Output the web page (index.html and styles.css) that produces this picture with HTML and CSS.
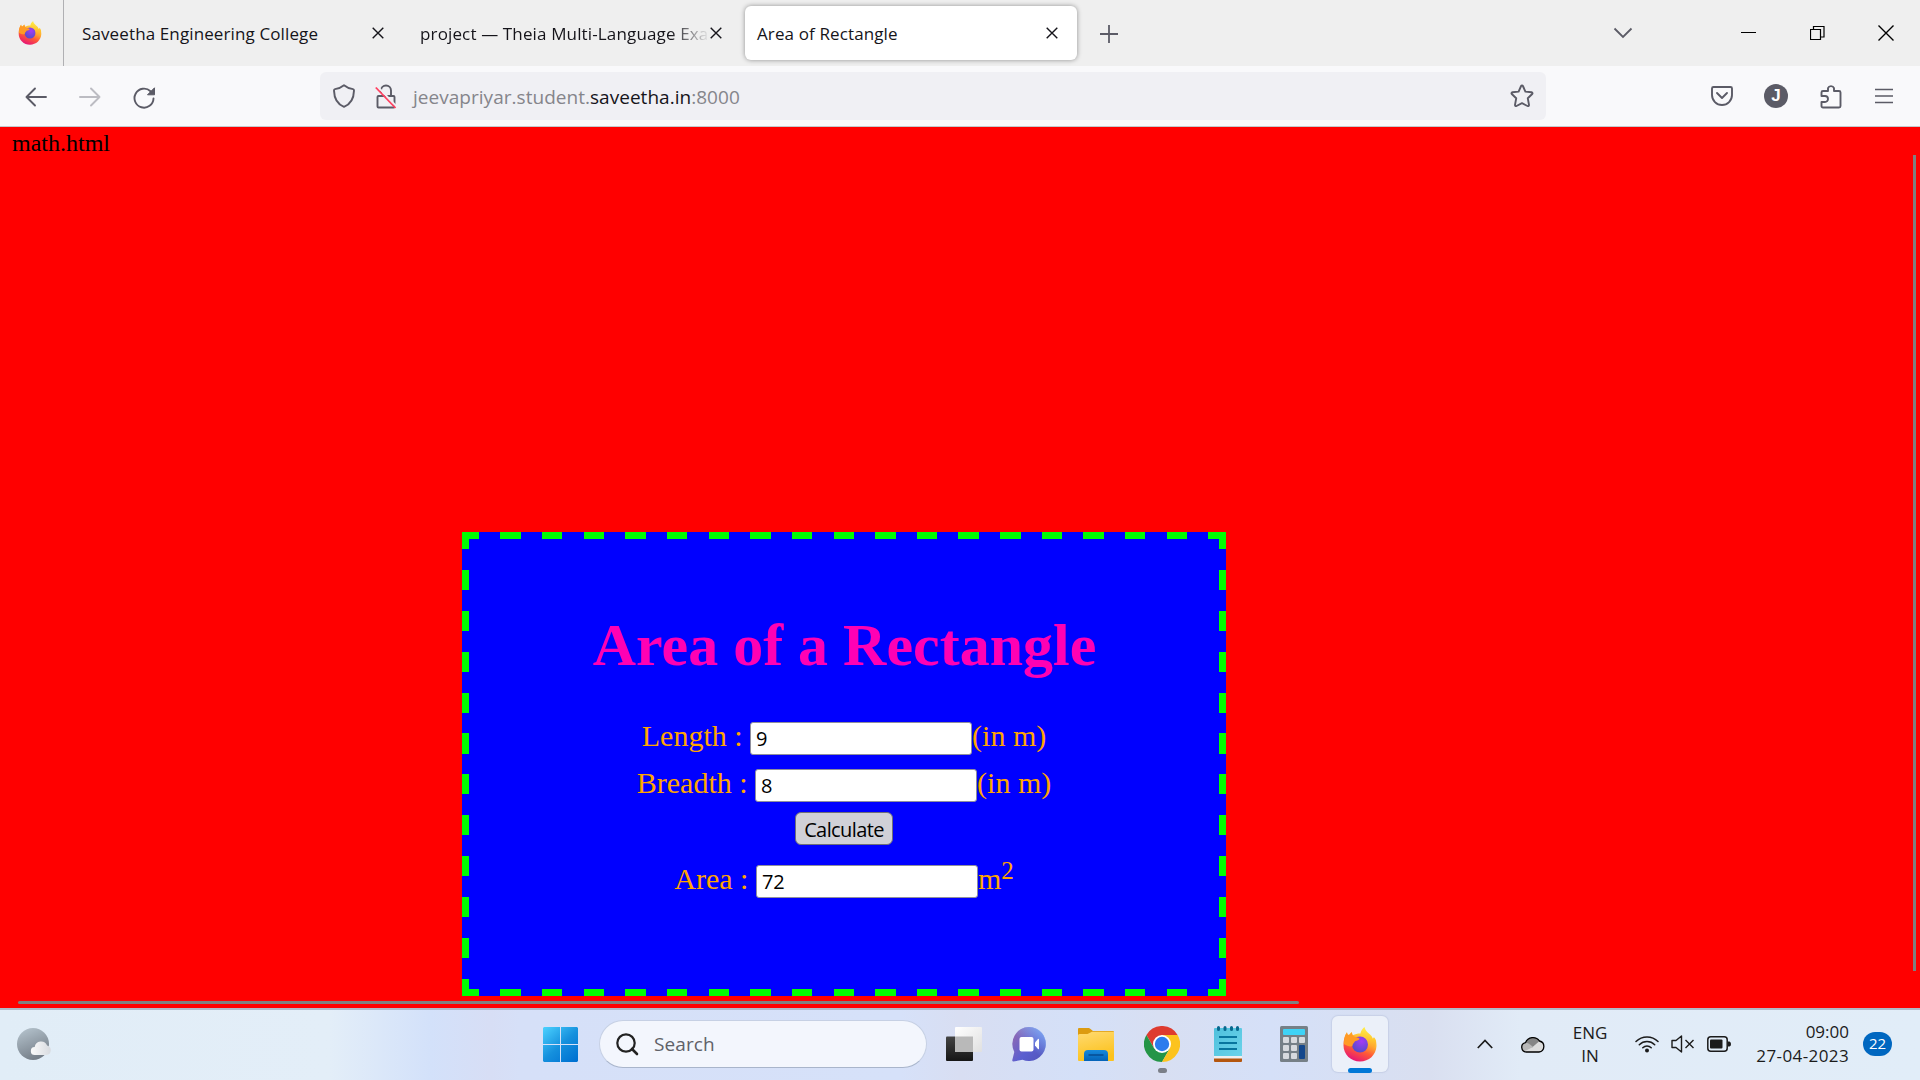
FILE: index.html
```html
<!DOCTYPE html>
<html lang="en">
<head>
<meta charset="utf-8">
<title>Area of Rectangle</title>
<link rel="stylesheet" href="styles.css">
</head>
<body>
<svg class="defs" width="0" height="0" aria-hidden="true">
  <defs>
    <linearGradient id="ffBody" x1="0.8" y1="0" x2="0.3" y2="1"><stop offset="0" stop-color="#fff44f"/><stop offset=".35" stop-color="#ffb02e"/><stop offset=".62" stop-color="#ff5a36"/><stop offset="1" stop-color="#e5107a"/></linearGradient>
    <radialGradient id="ffGlobe" cx=".6" cy=".3" r=".8"><stop offset="0" stop-color="#a53bf5"/><stop offset="1" stop-color="#4a4fc4"/></radialGradient>
    <linearGradient id="ffTail" x1="0.6" y1="0" x2="0.5" y2="1"><stop offset="0" stop-color="#fff44f"/><stop offset=".5" stop-color="#ffc52e"/><stop offset="1" stop-color="#ff7a2e" stop-opacity="0"/></linearGradient>
    <symbol id="firefox" viewBox="0 0 34 35">
      <path fill="url(#ffBody)" d="M4 5c0 1 .3 2.300.8 3L6.500 7.500C7 6.500 8 5.500 9 5c-.1 1.300.2 2.500.8 3.300C13 6.500 16 6.200 18.500 6.500L23 6l6 5.500c1 .2 1.500-.2 1.800-.7C33 14 33.600 16 33.500 19c-.5 9-7.500 15.500-16.500 15.500S.5 27.500.5 18.500C.5 13 1.500 8.500 4 5z"/>
      <circle cx="17" cy="17.500" r="8" fill="url(#ffGlobe)"/>
      <path fill="url(#ffTail)" d="M21.500 0c-3.500 3-4.200 5.500-3.900 8 4.500.8 7.800 4 7.800 9 0 4-2 7-5 8.500 7-.5 12.300-5 12.800-10 .1-2-.9-4.200-2.400-5.500-.1 1-.5 1.800-1 2C29.500 7.500 22.500 6 21.500 0z"/>
      <path fill="#ff9a25" d="M4 5.500c.2 1.200.6 2 1.200 2.500L7 7.500c.5-1 1.200-1.800 2-2.200-.1 1.500.4 2.800 1.300 3.700 1.700 1 4.700 1.600 6.200 2.500 0 1.400-2.500 2.300-4.500 2.800-1 2-2.500 2.700-2.700 4.700-2 1-5 0-8.500-2C1 12 2 8.500 4 5.500z"/>
    </symbol>
    <symbol id="close" viewBox="0 0 12 12"><path d="M.7.7l10.600 10.600M11.300.7L.7 11.300" fill="none" stroke="#15141a" stroke-width="1.400"/></symbol>
  </defs>
</svg>

<header class="tabbar">
  <div class="view"><svg width="24" height="24"><use href="#firefox"/></svg></div>
  <div class="tab first"><span class="tab-text">Saveetha Engineering College</span><svg width="12" height="12"><use href="#close"/></svg></div>
  <div class="tab second"><span class="tab-text">project — Theia Multi-Language Exa</span><svg width="12" height="12"><use href="#close"/></svg></div>
  <div class="tab active"><span class="tab-text">Area of Rectangle</span><svg width="12" height="12"><use href="#close"/></svg></div>
  <svg class="plus" width="18" height="18" viewBox="0 0 18 18"><path d="M9 0v18M0 9h18" stroke="#5b5b66" stroke-width="1.800"/></svg>
  <div class="window-controls">
    <svg width="20" height="12" viewBox="0 0 20 12"><path d="M1.500 1.500L10 10l8.500-8.500" fill="none" stroke="#5b5b66" stroke-width="1.800"/></svg>
    <svg class="min" width="15" height="2" viewBox="0 0 15 2"><path d="M0 0h15v1H0z"/></svg>
    <svg class="restore" width="15" height="15" viewBox="0 0 15 15"><path d="M.5 3.500h10v10H.5zM3.500 3V.5h10.500v10.500h-3" fill="none" stroke="#000" stroke-width="1.200"/></svg>
    <svg class="quit" width="16" height="16" viewBox="0 0 16 16"><path d="M.5.5l15 15M15.500.5l-15 15" stroke="#000" stroke-width="1.400"/></svg>
  </div>
</header>

<nav class="toolbar">
  <svg class="back" width="22" height="20" viewBox="0 0 22 20"><path d="M21 10H1.500M10 1.500L1.500 10l8.500 8.500" fill="none" stroke="#5b5b66" stroke-width="1.900" stroke-linecap="round" stroke-linejoin="round"/></svg>
  <svg class="fwd" width="22" height="20" viewBox="0 0 22 20"><path d="M1 10h19.500M12 1.500l8.500 8.500-8.500 8.500" fill="none" stroke="#bcbcc2" stroke-width="1.900" stroke-linecap="round" stroke-linejoin="round"/></svg>
  <svg class="reload" width="23" height="22" viewBox="0 0 23 22"><path d="M20.500 11.500a9.500 9.500 0 1 1-3-7.300" fill="none" stroke="#5b5b66" stroke-width="1.900" stroke-linecap="round"/><path d="M21.500.8v7h-7z" fill="#5b5b66" stroke="#5b5b66" stroke-linejoin="round"/></svg>
  <div class="urlbar">
    <svg width="22" height="24" viewBox="0 0 22 24"><path d="M11 1.200c3 2.400 6 3.600 9 3.900.9.100 1 .7 1 1.500-.2 7.500-3 13.400-10 16.200C4 20 1.200 14.100 1 6.600 1 5.800 1.100 5.200 2 5.100c3-.3 6-1.500 9-3.900z" fill="none" stroke="#5b5b66" stroke-width="1.900" stroke-linejoin="round"/></svg>
    <svg class="lock" width="22" height="25" viewBox="0 0 22 25"><path d="M6 9V6.500a5 5 0 0 1 10 0V12M4 12h14.500a1 1 0 0 1 1 1v9.500a1 1 0 0 1-1 1h-15a1 1 0 0 1-1-1V13a1 1 0 0 1 1-1z" fill="none" stroke="#5b5b66" stroke-width="1.900" stroke-linejoin="round"/><path d="M2.200 2.200L21.500 22.500" stroke="#f0f0f4" stroke-width="2"/><path d="M.8 3.500L20.500 24" stroke="#ff4060" stroke-width="1.800"/></svg>
    <span class="url">jeevapriyar.student.<b>saveetha.in</b>:8000</span>
    <svg class="star" width="24" height="24" viewBox="0 0 24 24"><path d="M11.100 2c.4-.8 1.400-.8 1.800 0l2.500 5.600 6.200.7c.9.100 1.200 1.100.6 1.700l-4.400 4.300 1.200 6.600c.1.900-.7 1.500-1.500 1.100L12 19.200 6.500 22c-.8.400-1.600-.2-1.500-1.100l1.200-6.600L1.800 10c-.6-.6-.3-1.600.6-1.700l6.200-.7z" fill="none" stroke="#5b5b66" stroke-width="1.900" stroke-linejoin="round"/></svg>
  </div>
  <div class="tools">
    <svg width="22" height="20" viewBox="0 0 22 20"><path d="M2.500 1h17a1.500 1.500 0 0 1 1.500 1.500V9a10 10 0 0 1-20 0V2.500A1.500 1.500 0 0 1 2.500 1z" fill="none" stroke="#5b5b66" stroke-width="1.900"/><path d="M6 7l5 5 5-5" fill="none" stroke="#5b5b66" stroke-width="1.900" stroke-linecap="round" stroke-linejoin="round"/></svg>
    <span class="avatar">J</span>
    <svg width="22" height="25" viewBox="0 0 22 25"><path d="M1.500 12V8.500A1.500 1.500 0 0 1 3 7H8V4.200a3.200 3.200 0 0 1 6 0V7h5a1.500 1.500 0 0 1 1.500 1.500v13.500A1.500 1.500 0 0 1 19 23.500H3A1.500 1.500 0 0 1 1.500 22V18H5a2.800 2.800 0 0 0 0-6z" fill="none" stroke="#5b5b66" stroke-width="1.900" stroke-linejoin="round"/></svg>
    <svg class="menu" width="18" height="16" viewBox="0 0 18 16"><path d="M0 1.500h18M0 8h18M0 14.500h18" stroke="#5b5b66" stroke-width="1.700"/></svg>
  </div>
</nav>

<main class="page">
  <div class="page-note">math.html</div>
  <form class="box">
    <h1>Area of a Rectangle</h1>
    <div class="row"><label>Length :</label><input type="text" value="9"><span>(in m)</span></div>
    <div class="row breadth"><label>Breadth :</label><input type="text" value="8"><span>(in m)</span></div>
    <button type="button">Calculate</button>
    <div class="row area"><label>Area :</label><input type="text" value="72"><span>m<sup>2</sup></span></div>
  </form>
  <i class="scroll-v"></i>
  <i class="scroll-h"></i>
</main>

<footer class="taskbar">
  <svg class="weather" width="36" height="34" viewBox="0 0 36 34"><defs><linearGradient id="moon" x1=".2" y1="0" x2=".6" y2="1"><stop stop-color="#b4c2cc"/><stop offset="1" stop-color="#737c86"/></linearGradient><linearGradient id="wc"><stop stop-color="#fafafa"/><stop offset="1" stop-color="#d8dbe0"/></linearGradient></defs><circle cx="17" cy="17" r="16" fill="url(#moon)"/><path d="M19 28a4 4 0 0 1-.3-8 6.500 6.500 0 0 1 12.400-1.600A4.900 4.900 0 0 1 30.500 28z" fill="url(#wc)"/></svg>
  <div class="apps">
    <svg class="start" width="35" height="35" viewBox="0 0 35 35"><defs><linearGradient id="win" gradientUnits="userSpaceOnUse" x1="0" y1="0" x2="30" y2="35"><stop stop-color="#4cd2ff"/><stop offset=".55" stop-color="#1590dd"/><stop offset="1" stop-color="#0072d2"/></linearGradient></defs><path d="M1 0h16v17H0V1zM18 0h16l1 1v16H18zM0 18h17v17H1l-1-1zM18 18h17v16l-1 1H18z" fill="url(#win)"/></svg>
    <div class="search">
      <svg width="23" height="23" viewBox="0 0 23 23"><circle cx="10" cy="10" r="8.700" fill="none" stroke="#222" stroke-width="2.200"/><path d="M16 16l5 5" stroke="#222" stroke-width="2.600" stroke-linecap="round"/></svg>
      <span>Search</span>
    </div>
    <svg class="i-task" width="36" height="34" viewBox="0 0 36 34"><defs><linearGradient id="tv1" x2="0" y2="1"><stop stop-color="#444"/><stop offset="1" stop-color="#161616"/></linearGradient><linearGradient id="tv2" x2="1" y2="1"><stop stop-color="#fff"/><stop offset="1" stop-color="#e0e0e0"/></linearGradient></defs><rect y="9.500" width="27" height="24.500" rx="1" fill="url(#tv1)"/><rect x="9" y="0" width="27" height="25" rx="1" fill="url(#tv2)"/><path d="M9 9.500h18V25H9z" fill="#b9b9b9"/></svg>
    <svg class="i-chat" width="34" height="35" viewBox="0 0 34 35"><defs><linearGradient id="chat" x1=".1" y1=".1" x2=".9" y2=".8"><stop stop-color="#9169b2"/><stop offset=".6" stop-color="#5b5fd0"/><stop offset="1" stop-color="#5558c0"/></linearGradient><linearGradient id="chat2" x1="1" y1="0" x2=".5" y2=".6"><stop stop-color="#85b4f8"/><stop offset="1" stop-color="#85b4f8" stop-opacity="0"/></linearGradient></defs><path d="M17 0a17 17 0 1 1-6.500 32.800L1.500 34.500Q0 34.500.3 33L2.300 25A17 17 0 0 1 17 0z" fill="url(#chat)"/><circle cx="17" cy="17" r="17" fill="url(#chat2)"/><rect x="7.500" y="10" width="14" height="14.500" rx="2" fill="#fff"/><path d="M23 15.500l3-3.500q1-.8 1 .5v9q0 1.300-1 .5l-3-3.500z" fill="#fff"/></svg>
    <svg class="i-folder" width="36" height="33" viewBox="0 0 36 33"><defs><linearGradient id="fold" x2=".3" y2="1"><stop stop-color="#ffda72"/><stop offset="1" stop-color="#fcc21c"/></linearGradient><linearGradient id="foldb" x2="0" y2="1"><stop stop-color="#1789dc"/><stop offset="1" stop-color="#0463b8"/></linearGradient></defs><path d="M0 1q0-1 1-1h9.500q1 0 1.700.8L15 3h20q1 0 1 1v7H0z" fill="#dc9b10"/><path d="M0 7.500Q0 6 1.500 6h8L14 3.700h22V32q0 1-1 1H1q-1 0-1-1z" fill="url(#fold)"/><path d="M6 33v-7q0-4 4-4h16q4 0 4 4v7z" fill="url(#foldb)"/><path d="M10.500 27h15" stroke="#074f96" stroke-width="1.600"/></svg>
    <div class="app i-chrome"><svg width="36" height="36" viewBox="-18 -18 36 36"><path d="M0-9h15.600A18 18 0 0 0-15.600-9L-7.800 4.500z" fill="#de3b2f"/><path d="M-7.800 4.500L-15.600-9A18 18 0 0 0 0 18L7.800 4.500z" fill="#249547"/><path d="M7.800 4.500L0 18A18 18 0 0 0 15.600-9H0z" fill="#fcc31e"/><circle r="9" fill="#fff"/><circle r="7.200" fill="#2b7ced"/></svg><i class="dot"></i></div>
    <svg class="i-note" width="28" height="36" viewBox="0 0 28 36"><defs><linearGradient id="note" x2="1" y2="1"><stop stop-color="#4fc0dc"/><stop offset="1" stop-color="#6bd3ea"/></linearGradient></defs><path d="M0 31h28v4q0 1-1 1H1q-1 0-1-1z" fill="#b4560e"/><path d="M0 28h28v4.500H0z" fill="#efefef"/><path d="M0 3q0-1 1-1h26q1 0 1 1v27H0z" fill="url(#note)"/><path d="M4.500 1.500v2M11 1.500v2M17.500 1.500v2M23.500 1.500v2" stroke="#08688e" stroke-width="3" stroke-linecap="round"/><path d="M5 11h18M5 17h18M5 23h18" stroke="#08759e" stroke-width="2"/></svg>
    <svg class="i-calc" width="28" height="36" viewBox="0 0 28 36"><rect width="28" height="36" rx="1.500" fill="#768087"/><rect x="3" y="3" width="22" height="6" rx="1" fill="#3fd3f6"/><g fill="#d7dade"><rect x="3" y="11" width="6" height="6" rx="1"/><rect x="11" y="11" width="6" height="6" rx="1"/><rect x="19" y="11" width="6" height="6" rx="1"/><rect x="3" y="19" width="6" height="6" rx="1"/><rect x="11" y="19" width="6" height="6" rx="1"/><rect x="3" y="27" width="6" height="6" rx="1"/><rect x="11" y="27" width="6" height="6" rx="1"/></g><rect x="19" y="19" width="6" height="14" rx="1" fill="#13478c"/></svg>
    <div class="app i-fox"><svg width="34" height="35"><use href="#firefox"/></svg><i class="bar"></i></div>
  </div>
  <div class="tray">
    <svg class="caret" width="16" height="10" viewBox="0 0 16 10"><path d="M.8 9L8 1.500 15.200 9" fill="none" stroke="#1b1b1b" stroke-width="1.700"/></svg>
    <svg class="cloud" width="24" height="17" viewBox="0 0 24 17"><defs><clipPath id="cl"><path d="M5.500 16a4.700 4.700 0 0 1-1-9.300A8 8 0 0 1 18.500 5 5.600 5.600 0 0 1 18 16z"/></clipPath></defs><g clip-path="url(#cl)"><path d="M0 0h24v17H0z" fill="#dcdcdc"/><path d="M0 0h24v7.500l-6-2-7 6L3 6z" fill="#858585"/><path d="M0 6q6-1 12 5L2 16H0z" fill="#b8b8b8"/></g><path d="M5.500 16a4.700 4.700 0 0 1-1-9.300A8 8 0 0 1 18.500 5 5.600 5.600 0 0 1 18 16z" fill="none" stroke="#000" stroke-width="1.300"/></svg>
    <div class="lang"><span>ENG</span><span>IN</span></div>
    <svg class="wifi" width="24" height="18" viewBox="0 0 24 18"><g fill="none" stroke="#1b1b1b" stroke-width="1.500" stroke-linecap="round"><path d="M1 6.500a15.500 15.500 0 0 1 22 0M4.300 9.700a11 11 0 0 1 15.400 0M7.800 12.800a6 6 0 0 1 8.400 0"/></g><circle cx="12" cy="15.500" r="2" fill="#1b1b1b"/></svg>
    <svg class="sound" width="24" height="18" viewBox="0 0 24 18"><g fill="none" stroke="#1b1b1b" stroke-width="1.400" stroke-linejoin="round"><path d="M1 5.500h4L10.500 1v16L5 12.500H1z"/><path d="M14.500 5l8 8M22.500 5l-8 8"/></g></svg>
    <svg class="battery" width="24" height="16" viewBox="0 0 24 16"><rect x=".8" y=".8" width="19.400" height="14.400" rx="3" fill="none" stroke="#1b1b1b" stroke-width="1.500"/><rect x="3" y="3.500" width="12.500" height="9" rx="1" fill="#1b1b1b"/><path d="M21 5.500h1.500q1.500.5 1.500 2.500t-1.500 2.500H21z" fill="#1b1b1b"/></svg>
    <div class="clock"><span>09:00</span><span class="date">27-04-2023</span></div>
    <span class="badge">22</span>
  </div>
</footer>
</body>
</html>
```
FILE: styles.css
```css
* { box-sizing: border-box; }

body {
  margin: 0;
  width: 1920px;
  height: 1080px;
  display: flex;
  flex-direction: column;
  overflow: hidden;
  font-family: "Open Sans", "Noto Sans", sans-serif;
  color: #15141a;
}

svg { display: block; flex: none; }
.defs { position: absolute; }

/* Tab strip */
.tabbar {
  height: 66px;
  flex: none;
  display: flex;
  align-items: center;
  background: #efefef;
}

.view {
  width: 64px;
  height: 66px;
  padding: 21px 0 0 18px;
  border-right: 1px solid #b0b0b3;
}

.tab {
  width: 332px;
  height: 54px;
  display: flex;
  align-items: center;
  padding: 0 19px 0 12px;
  font-size: 17px;
  letter-spacing: .12px;
  border-radius: 6px;
}

.tab.first { margin-left: 6px; padding-right: 18px; }
.tab.second { margin-left: 6px; padding-right: 18px; letter-spacing: .14px; }
.tab.active { margin-left: 5px; background: #fff; box-shadow: 0 0 5px rgba(0, 0, 0, .4); }

.tab-text { flex: 1; white-space: nowrap; }
.second .tab-text {
  -webkit-mask-image: linear-gradient(90deg, #000 calc(100% - 40px), transparent);
  mask-image: linear-gradient(90deg, #000 calc(100% - 40px), transparent);
}

.plus { margin-left: 23px; margin-top: 1px; }

.window-controls { margin-left: auto; display: flex; align-items: center; padding-right: 26px; }
.min { margin-left: 108px; }
.restore { margin-left: 54px; }
.quit { margin-left: 53px; }

/* Navigation */
.toolbar {
  height: 61px;
  flex: none;
  display: flex;
  align-items: center;
  padding-left: 25px;
  background: #f9f9fb;
  border-bottom: 1px solid #c4c9cc;
}

.back, .fwd { margin-top: 2px; }
.fwd { margin-left: 32px; }
.reload { margin-left: 32px; margin-top: 3px; }

.urlbar {
  width: 1226px;
  height: 48px;
  margin-left: 164px;
  display: flex;
  align-items: center;
  padding: 0 12px 0 13px;
  background: #f0f0f4;
  border-radius: 6px;
}

.lock { margin-left: 20px; }
.url { flex: 1; margin-left: 16px; padding-top: 2px; font-size: 19px; letter-spacing: .03px; color: #85858b; white-space: nowrap; }
.url b { font-weight: 400; color: #15141a; }

.tools { display: flex; align-items: center; margin-left: 165px; }
.avatar {
  width: 24px;
  height: 24px;
  margin: 0 32px 0 31px;
  border-radius: 50%;
  background: #5b5b66;
  color: #fff;
  font: 700 17px/24px "Liberation Sans", Arial, sans-serif;
  text-align: center;
}
.menu { margin-left: 33px; }

/* Page */
.page {
  position: relative;
  height: 881px;
  flex: none;
  background: #f00;
  font-family: "Liberation Serif", "Times New Roman", serif;
}

.page-note { height: 405px; padding: 3px 12px; font-size: 24px; line-height: 27px; color: #000; }

.box {
  width: 764px;
  height: 464px;
  margin-left: 462px;
  padding-top: 79px;
  display: flex;
  flex-direction: column;
  align-items: center;
  font-size: 30px;
  color: orange;
  background:
    repeating-linear-gradient(90deg, #0f0 -3.3px, #0f0 17.1px, #00f 17.1px, #00f 38.35px) 0 0 / 100% 7px no-repeat,
    repeating-linear-gradient(90deg, #0f0 -3.3px, #0f0 17.1px, #00f 17.1px, #00f 38.35px) 0 100% / 100% 7px no-repeat,
    repeating-linear-gradient(180deg, #0f0 -3px, #0f0 17px, #00f 17px, #00f 37.9px) 0 0 / 7px 100% no-repeat,
    repeating-linear-gradient(180deg, #0f0 -3px, #0f0 17px, #00f 17px, #00f 37.9px) 100% 0 / 7px 100% no-repeat,
    #00f;
}

h1 { margin: 0 0 43px; padding-left: 1px; font-size: 60px; line-height: 68px; color: #ff00b4; white-space: nowrap; }

.row { height: 33px; display: flex; align-items: flex-start; line-height: 28px; }
.row label { margin-right: 7.500px; }
.row.breadth { margin: 14px 0 10px; }
.row.area { margin-top: 20px; }

input {
  width: 222px;
  height: 33px;
  padding: 0 5px;
  border: 1px solid #8f8f9d;
  border-radius: 3px;
  background: #fff;
  color: #000;
  font: 20px "Open Sans", sans-serif;
}

button {
  width: 98px;
  height: 33px;
  padding: 2px 0 0;
  border: 1px solid #6f6f78;
  border-radius: 6px;
  background: #d0d0d7;
  color: #000;
  font: 20px/29px "Open Sans", sans-serif;
  letter-spacing: -.6px;
}

sup { font-size: 25px; line-height: 0; vertical-align: 10px; }

.scroll-v { position: absolute; left: 1913px; top: 28px; width: 3px; height: 816px; background: #808080; }
.scroll-h { position: absolute; left: 18px; top: 874px; width: 1281px; height: 3px; border-radius: 2px; background: #808080; }

/* Taskbar */
.taskbar {
  height: 72px;
  flex: none;
  display: flex;
  align-items: center;
  padding: 0 0 2px 16px;
  border-top: 2px solid #b0b9c8;
  background: linear-gradient(90deg, #e1edf7 0, #e3eef8 330px, #d3e1fa 430px, #d7def5 490px, #d6e0f8 520px, #d6e1f9 900px, #d8def2 960px, #d4e0f8 1080px, #d8dff2 1160px, #d5e0f8 1270px, #d9dff0 1430px, #e1ebf7 1520px, #e1edf8 1920px);
}

.apps { display: flex; align-items: center; margin-left: 491px; }
.search {
  width: 328px;
  height: 48px;
  margin-left: 21px;
  display: flex;
  align-items: center;
  padding-left: 16px;
  border: 1.500px solid #c6d0e4;
  border-bottom-color: #a9b5cb;
  border-radius: 24px;
  background: #f3f6fd;
  font-size: 19px;
  color: #606168;
}
.search span { margin-left: 15px; letter-spacing: .1px; }
.i-task { margin-left: 19px; }
.i-chat { margin-left: 30px; }
.i-folder { margin-left: 32px; }
.i-chrome { margin-left: 30px; }
.i-note { margin-left: 34px; }
.i-calc { margin-left: 38px; }
.app { position: relative; display: flex; justify-content: center; align-items: center; }
.i-fox {
  width: 56px;
  height: 56px;
  margin-left: 24px;
  background: #ebf0f9;
  border-radius: 6px;
  box-shadow: 0 0 1px 1px rgba(150, 165, 195, .25);
}
.dot, .bar { position: absolute; height: 5px; border-radius: 3px; }
.dot { width: 9px; left: 14px; top: 42px; background: #7b7f88; }
.bar { width: 24px; left: 16px; top: 52px; background: #0078d7; }

.tray { display: flex; align-items: center; margin-left: 89px; color: #1b1b1b; font-size: 17px; }
.cloud { margin-left: 28px; }
.lang { width: 36px; margin-left: 27px; display: flex; flex-direction: column; align-items: center; line-height: 23px; }
.wifi { margin-left: 27px; }
.sound { margin-left: 12px; }
.battery { margin-left: 12px; }
.clock { width: 118px; display: flex; flex-direction: column; align-items: flex-end; line-height: 24px; }
.date { letter-spacing: .4px; }
.badge {
  width: 29px;
  height: 24px;
  margin-left: 14px;
  border-radius: 12px;
  background: #0067c0;
  color: #fff;
  font-size: 15px;
  line-height: 23px;
  text-align: center;
}
```
